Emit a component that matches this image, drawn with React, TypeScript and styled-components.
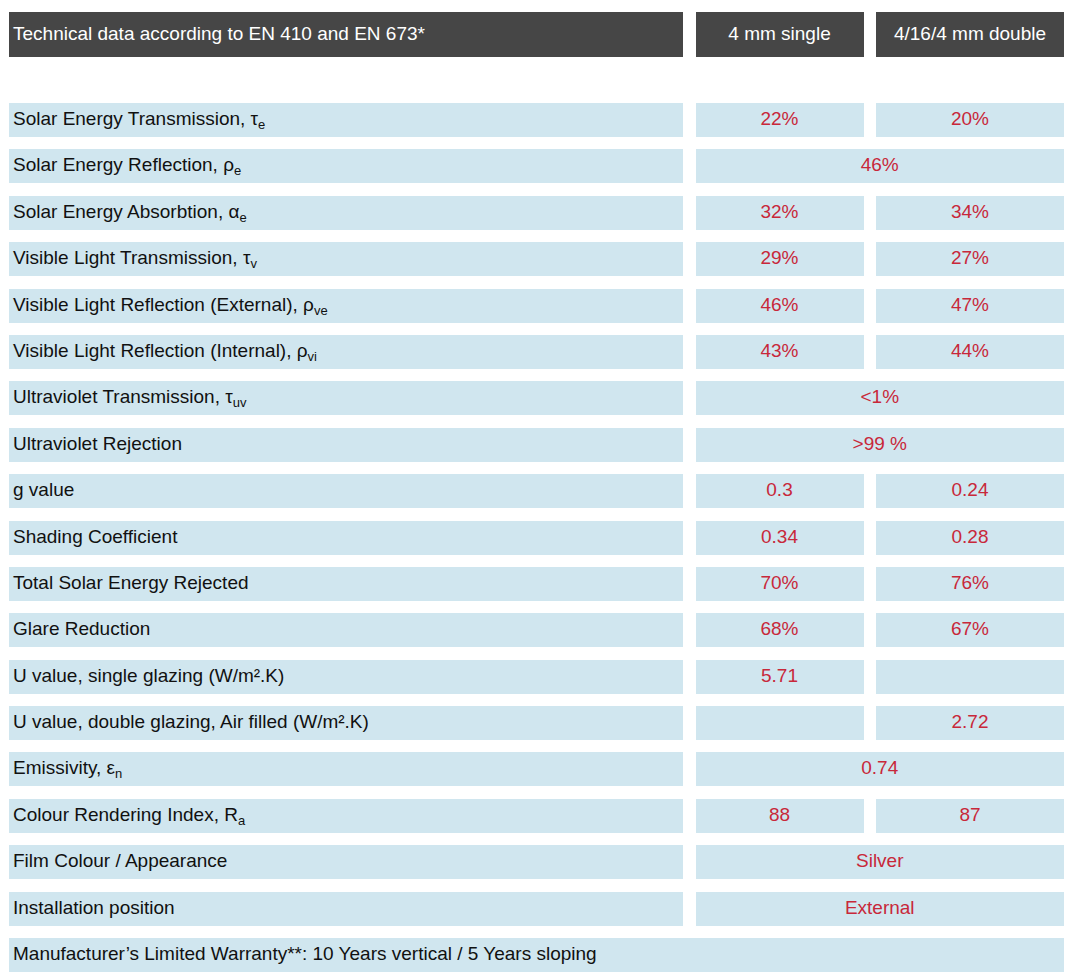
import React from 'react'
import styled, { createGlobalStyle } from 'styled-components'

const GlobalStyle = createGlobalStyle`
  html, body {
    margin: 0;
    padding: 0;
    background: #ffffff;
  }
  body {
    font-family: "Liberation Sans", Arial, sans-serif;
  }
`

const Page = styled.div`
  width: 1055px;
  padding: 12px 0 0 9px;
`

const columns = `
  display: grid;
  grid-template-columns: 674px 168px 188px;
  column-gap: 12.5px;
`

const HeaderRow = styled.div`
  ${columns}
  height: 45px;
  margin-bottom: 46px;
`

const HeadCell = styled.div<{ align?: 'left' | 'center' }>`
  display: flex;
  align-items: center;
  justify-content: ${({ align }) => (align === 'left' ? 'flex-start' : 'center')};
  padding: 0 ${({ align }) => (align === 'left' ? '4px' : '0')};
  padding-bottom: 1px;
  background: #464646;
  color: #ffffff;
  font-size: 19px;
`

const Body = styled.div`
  display: flex;
  flex-direction: column;
  gap: 12.4px;
`

const Row = styled.div`
  ${columns}
  height: 34px;
`

const Label = styled.div<{ span?: number }>`
  grid-column: span ${({ span }) => span ?? 1};
  display: flex;
  align-items: center;
  padding: 0 0 2px 4px;
  background: #d0e6ef;
  color: #111111;
  font-size: 19px;
  white-space: nowrap;
`

const ValueCell = styled.div<{ span?: number }>`
  grid-column: span ${({ span }) => span ?? 1};
  display: flex;
  align-items: center;
  justify-content: center;
  padding-bottom: 2px;
  background: #d0e6ef;
  color: #c8283a;
  font-size: 19px;
`

const Sub = styled.span`
  font-size: 13px;
  vertical-align: -4px;
  line-height: 0;
`

type Value = string | null
type RowData = {
  label: React.ReactNode
  values: Value[] | string
}

const sub = (main: string, s: string) => (
  <>
    {main}
    <Sub>{s}</Sub>
  </>
)

const rows: RowData[] = [
  { label: <>Solar Energy Transmission, {sub('τ', 'e')}</>, values: ['22%', '20%'] },
  { label: <>Solar Energy Reflection, {sub('ρ', 'e')}</>, values: '46%' },
  { label: <>Solar Energy Absorbtion, {sub('α', 'e')}</>, values: ['32%', '34%'] },
  { label: <>Visible Light Transmission, {sub('τ', 'v')}</>, values: ['29%', '27%'] },
  { label: <>Visible Light Reflection (External), {sub('ρ', 've')}</>, values: ['46%', '47%'] },
  { label: <>Visible Light Reflection (Internal), {sub('ρ', 'vi')}</>, values: ['43%', '44%'] },
  { label: <>Ultraviolet Transmission, {sub('τ', 'uv')}</>, values: '<1%' },
  { label: 'Ultraviolet Rejection', values: '>99 %' },
  { label: 'g value', values: ['0.3', '0.24'] },
  { label: 'Shading Coefficient', values: ['0.34', '0.28'] },
  { label: 'Total Solar Energy Rejected', values: ['70%', '76%'] },
  { label: 'Glare Reduction', values: ['68%', '67%'] },
  { label: 'U value, single glazing (W/m².K)', values: ['5.71', null] },
  { label: 'U value, double glazing, Air filled (W/m².K)', values: [null, '2.72'] },
  { label: <>Emissivity, {sub('ε', 'n')}</>, values: '0.74' },
  { label: <>Colour Rendering Index, {sub('R', 'a')}</>, values: ['88', '87'] },
  { label: 'Film Colour / Appearance', values: 'Silver' },
  { label: 'Installation position', values: 'External' },
]

export default function App() {
  return (
    <>
      <GlobalStyle />
      <Page>
        <HeaderRow>
          <HeadCell align="left">Technical data according to EN 410 and EN 673*</HeadCell>
          <HeadCell>4 mm single</HeadCell>
          <HeadCell>4/16/4 mm double</HeadCell>
        </HeaderRow>
        <Body>
          {rows.map((row, i) => (
            <Row key={i}>
              <Label>
                <span>{row.label}</span>
              </Label>
              {typeof row.values === 'string' ? (
                <ValueCell span={2}>{row.values}</ValueCell>
              ) : (
                row.values.map((v, j) => <ValueCell key={j}>{v}</ValueCell>)
              )}
            </Row>
          ))}
          <Row>
            <Label span={3}>
              <span>Manufacturer’s Limited Warranty**: 10 Years vertical / 5 Years sloping</span>
            </Label>
          </Row>
        </Body>
      </Page>
    </>
  )
}
